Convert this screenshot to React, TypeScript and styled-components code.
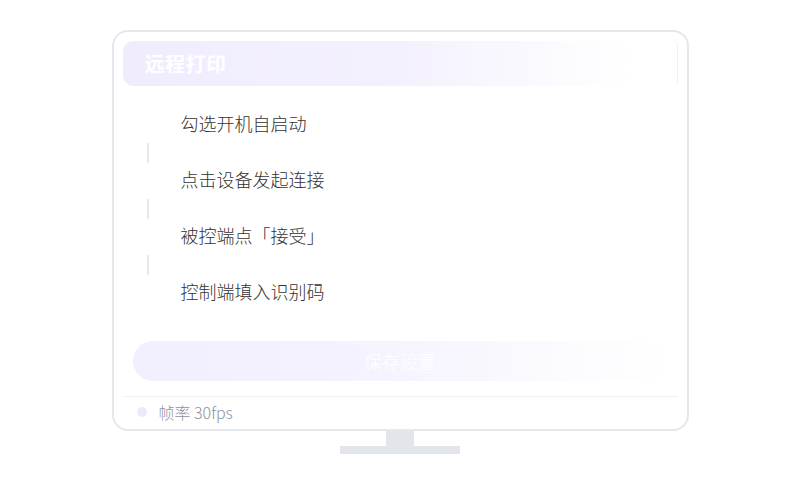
import React from "react";
import styled, { createGlobalStyle } from "styled-components";

const GlobalStyle = createGlobalStyle`
  html, body {
    margin: 0;
    padding: 0;
    background: #ffffff;
  }
  body {
    font-family: "Noto Sans CJK SC", "Noto Sans", sans-serif;
  }
`;

const Page = styled.div`
  width: 800px;
  height: 500px;
  display: flex;
  flex-direction: column;
  align-items: center;
  padding-top: 30px;
  box-sizing: border-box;
`;

const Monitor = styled.div`
  width: 577px;
  height: 401px;
  box-sizing: border-box;
  border: 2px solid #e4e7ec;
  border-radius: 16px;
  background: #ffffff;
  padding: 9px 9px 0;
  display: flex;
  flex-direction: column;
`;

const Header = styled.div`
  height: 45px;
  border-radius: 10px 4px 4px 10px;
  background: linear-gradient(90deg, #f0ecfe 0%, #f4f1fe 50%, #ffffff 92%);
  border-right: 1px solid #eef0f4;
  display: flex;
  align-items: center;
  justify-content: space-between;
  padding: 0 18px 0 22px;
`;

const Title = styled.div`
  color: #ffffff;
  font-size: 20px;
  font-weight: 700;
  letter-spacing: 0.5px;
`;

const Badge = styled.div`
  color: #ffffff;
  font-size: 16px;
  font-weight: 700;
`;

const Steps = styled.div`
  display: flex;
  flex-direction: column;
  margin-top: 23px;
  padding-left: 24px;
`;

const Step = styled.div`
  height: 28px;
  line-height: 28px;
  padding-left: 34px;
  color: #333333;
  font-size: 18px;
  font-weight: 300;
`;

const Connector = styled.div`
  width: 2px;
  height: 20px;
  margin: 6px 0 2px;
  background: #e6e8ee;
`;

const SaveButton = styled.button`
  margin: 36px 10px 0;
  height: 40px;
  border: none;
  border-radius: 20px;
  background: linear-gradient(90deg, #f2effe 0%, #f5f3fe 45%, #ffffff 100%);
  color: #ffffff;
  font-family: inherit;
  font-size: 18px;
  font-weight: 300;
  cursor: pointer;
`;

const Divider = styled.div`
  height: 1px;
  background: #eef0f3;
  margin-top: 15px;
`;

const Footer = styled.div`
  flex: 1;
  display: flex;
  align-items: center;
  gap: 12px;
  padding-left: 14px;
  padding-bottom: 2px;
`;

const Dot = styled.span`
  width: 10px;
  height: 10px;
  border-radius: 50%;
  background: #ede9fc;
`;

const FooterText = styled.span`
  color: #8d929b;
  font-size: 16px;
  font-weight: 300;
`;

const Neck = styled.div`
  width: 28px;
  height: 15px;
  background: #e2e5ea;
`;

const Base = styled.div`
  width: 120px;
  height: 8px;
  background: #e2e5ea;
`;

const steps = ["勾选开机自启动", "点击设备发起连接", "被控端点「接受」", "控制端填入识别码"];

export default function App() {
  return (
    <>
      <GlobalStyle />
      <Page>
        <Monitor>
          <Header>
            <Title>远程打印</Title>
            <Badge>已连接</Badge>
          </Header>
          <Steps>
            {steps.map((s, i) => (
              <React.Fragment key={s}>
                {i > 0 && <Connector />}
                <Step>{s}</Step>
              </React.Fragment>
            ))}
          </Steps>
          <SaveButton>保存设置</SaveButton>
          <Divider />
          <Footer>
            <Dot />
            <FooterText>帧率 30fps</FooterText>
          </Footer>
        </Monitor>
        <Neck />
        <Base />
      </Page>
    </>
  );
}
